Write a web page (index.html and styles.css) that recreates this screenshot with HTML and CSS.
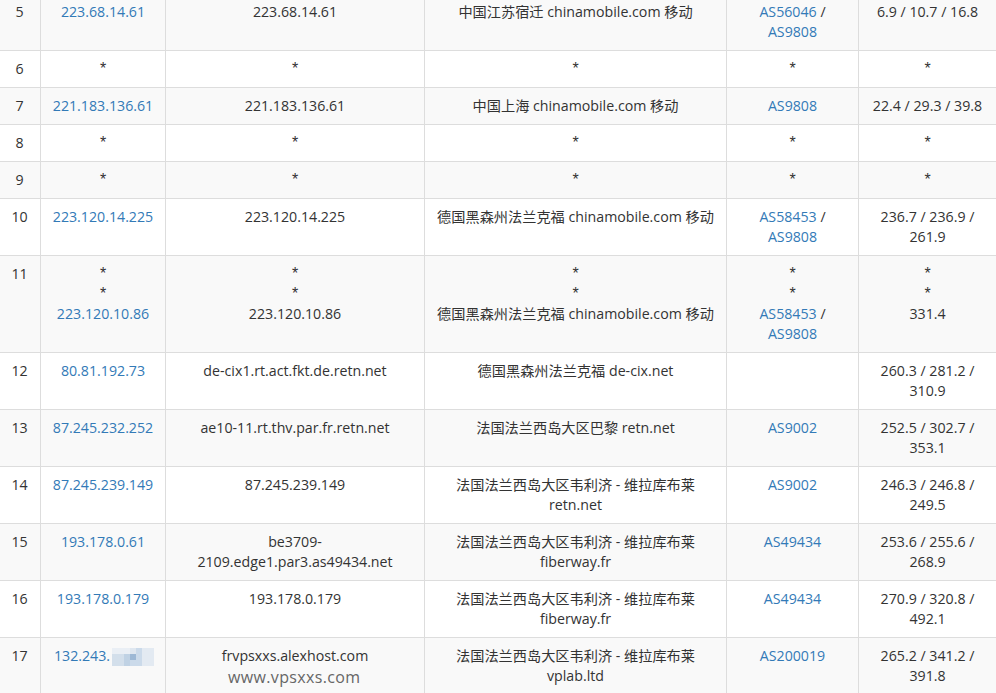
FILE: index.html
```html
<!DOCTYPE html>
<html lang="zh">
<head>
<meta charset="utf-8">
<title>路由追踪</title>
<link rel="stylesheet" href="styles.css">
</head>
<body>
<div class="viewport">
<table class="hops">
<colgroup><col class="c1"><col class="c2"><col class="c3"><col class="c4"><col class="c5"><col class="c6"></colgroup>
<tbody>
<tr><td>5</td><td><a>223.68.14.61</a></td><td>223.68.14.61</td><td>中国江苏宿迁 chinamobile.com 移动</td><td><a>AS56046</a> / <a>AS9808</a></td><td>6.9 / 10.7 / 16.8</td></tr>
<tr><td>6</td><td><span class="star">*</span></td><td><span class="star">*</span></td><td><span class="star">*</span></td><td><span class="star">*</span></td><td><span class="star">*</span></td></tr>
<tr><td>7</td><td><a>221.183.136.61</a></td><td>221.183.136.61</td><td>中国上海 chinamobile.com 移动</td><td><a>AS9808</a></td><td>22.4 / 29.3 / 39.8</td></tr>
<tr><td>8</td><td><span class="star">*</span></td><td><span class="star">*</span></td><td><span class="star">*</span></td><td><span class="star">*</span></td><td><span class="star">*</span></td></tr>
<tr><td>9</td><td><span class="star">*</span></td><td><span class="star">*</span></td><td><span class="star">*</span></td><td><span class="star">*</span></td><td><span class="star">*</span></td></tr>
<tr><td>10</td><td><a>223.120.14.225</a></td><td>223.120.14.225</td><td>德国黑森州法兰克福 chinamobile.com 移动</td><td><a>AS58453</a> / <a>AS9808</a></td><td>236.7 / 236.9 / 261.9</td></tr>
<tr><td>11</td><td><span class="star">*</span><br><span class="star">*</span><br><a>223.120.10.86</a></td><td><span class="star">*</span><br><span class="star">*</span><br>223.120.10.86</td><td><span class="star">*</span><br><span class="star">*</span><br>德国黑森州法兰克福 chinamobile.com 移动</td><td><span class="star">*</span><br><span class="star">*</span><br><a>AS58453</a> / <a>AS9808</a></td><td><span class="star">*</span><br><span class="star">*</span><br>331.4</td></tr>
<tr><td>12</td><td><a>80.81.192.73</a></td><td>de-cix1.rt.act.fkt.de.retn.net</td><td>德国黑森州法兰克福 de-cix.net</td><td></td><td>260.3 / 281.2 / 310.9</td></tr>
<tr><td>13</td><td><a>87.245.232.252</a></td><td>ae10-11.rt.thv.par.fr.retn.net</td><td>法国法兰西岛大区巴黎 retn.net</td><td><a>AS9002</a></td><td>252.5 / 302.7 / 353.1</td></tr>
<tr><td>14</td><td><a>87.245.239.149</a></td><td>87.245.239.149</td><td>法国法兰西岛大区韦利济 - 维拉库布莱 retn.net</td><td><a>AS9002</a></td><td>246.3 / 246.8 / 249.5</td></tr>
<tr><td>15</td><td><a>193.178.0.61</a></td><td>be3709-2109.edge1.par3.as49434.net</td><td>法国法兰西岛大区韦利济 - 维拉库布莱 fiberway.fr</td><td><a>AS49434</a></td><td>253.6 / 255.6 / 268.9</td></tr>
<tr><td>16</td><td><a>193.178.0.179</a></td><td>193.178.0.179</td><td>法国法兰西岛大区韦利济 - 维拉库布莱 fiberway.fr</td><td><a>AS49434</a></td><td>270.9 / 320.8 / 492.1</td></tr>
<tr><td>17</td><td><a>132.243.<svg class="mosaic" width="42" height="18" viewBox="0 0 7 3" aria-hidden="true"><rect width="7" height="3" fill="#dfe7f0"/><rect x="0" y="0" width="3" height="1" fill="#eaeff5"/><rect x="0" y="1" width="2" height="2" fill="#d3dfeb"/><rect x="2" y="1" width="1" height="2" fill="#c0d2e4"/><rect x="3" y="1" width="1" height="1" fill="#9db8d5"/><rect x="3" y="2" width="2" height="1" fill="#cbdaea"/><rect x="4" y="0" width="1" height="2" fill="#cbdaea"/><rect x="5" y="0" width="2" height="3" fill="#e3eaf2"/></svg></a></td><td>frvpsxxs.alexhost.com</td><td>法国法兰西岛大区韦利济 - 维拉库布莱 vplab.ltd</td><td><a>AS200019</a></td><td>265.2 / 341.2 / 391.8</td></tr>
</tbody>
</table>
<div class="watermark">www.vpsxxs.com</div>
</div>
</body>
</html>
```
FILE: styles.css
```css
html, body {
  margin: 0;
  padding: 0;
  background: #fff;
}
.viewport {
  position: relative;
  width: 996px;
  height: 693px;
  overflow: hidden;
}
.hops {
  width: 998px;
  margin: -7px 0 0 -2px;
  table-layout: fixed;
  border-collapse: collapse;
  font-family: "Open Sans", "Noto Sans CJK SC", sans-serif;
  font-size: 14.2px;
  line-height: 20px;
  color: #333;
}
.c1 { width: 42px; }
.c2 { width: 125px; }
.c3 { width: 259px; }
.c4 { width: 302px; }
.c5 { width: 132px; }
.c6 { width: 138px; }
.hops td {
  padding: 8px;
  border: 1px solid #ddd;
  text-align: center;
  vertical-align: top;
}
.hops tr:nth-child(odd) td {
  background: #f9f9f9;
}
.hops a {
  color: #337ab7;
}
.star {
  font-family: "Liberation Sans", sans-serif;
  font-size: 16px;
}
.mosaic {
  display: inline-block;
  vertical-align: -5px;
  margin-left: 2px;
  margin-right: -2px;
  filter: blur(0.6px);
}
.watermark {
  position: absolute;
  left: 228px;
  top: 666px;
  font-family: "Open Sans", sans-serif;
  font-size: 16px;
  line-height: 22px;
  letter-spacing: 0.35px;
  color: #666;
}
```
